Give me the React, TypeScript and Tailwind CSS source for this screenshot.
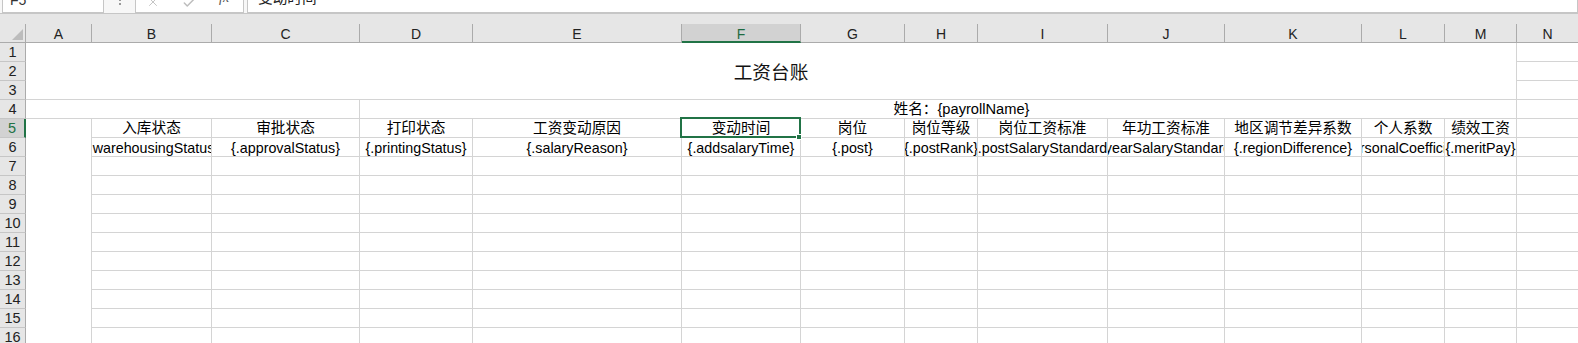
import React from "react";
import { X, Check, ChevronDown } from "lucide-react";

const GRID =
  "grid grid-cols-[26px_66px_120px_148px_113px_209px_119px_104px_73px_130px_117px_137px_83px_72px_1fr]";

const letters = ["A", "B", "C", "D", "E", "F", "G", "H", "I", "J", "K", "L", "M", "N"];
const heads = [
  "入库状态",
  "审批状态",
  "打印状态",
  "工资变动原因",
  "变动时间",
  "岗位",
  "岗位等级",
  "岗位工资标准",
  "年功工资标准",
  "地区调节差异系数",
  "个人系数",
  "绩效工资",
];
const data = [
  "{.warehousingStatus}",
  "{.approvalStatus}",
  "{.printingStatus}",
  "{.salaryReason}",
  "{.addsalaryTime}",
  "{.post}",
  "{.postRank}",
  "{.postSalaryStandard}",
  "{.yearSalaryStandard}",
  "{.regionDifference}",
  "{.personalCoefficient}",
  "{.meritPay}",
];

function RowHead({ n, active }: { n: number; active?: boolean }) {
  return (
    <div
      className={
        "flex items-center justify-center border-b border-b-[#c6c6c6] text-[14.5px] leading-none " +
        (active
          ? "bg-[#d2d2d2] border-r-2 border-r-[#217346] text-[#217346]"
          : "bg-[#e6e6e6] border-r border-r-[#ababab] text-[#222]")
      }
    >
      {n}
    </div>
  );
}

const cell = "border-r border-b border-[#d4d4d4]";
const nCell = "border-b border-[#d4d4d4]";

export default function App() {
  const bodyRows: React.ReactNode[] = [];

  // rows 1-3
  bodyRows.push(<RowHead key="rh1" n={1} />);
  bodyRows.push(
    <div
      key="title"
      className={`${cell} col-span-13 row-span-3 flex items-center justify-center pt-[5px] text-[18.67px] text-[#111]`}
    >
      工资台账
    </div>
  );
  bodyRows.push(<div key="n1" className={nCell} />);
  bodyRows.push(<RowHead key="rh2" n={2} />);
  bodyRows.push(<div key="n2" className={nCell} />);
  bodyRows.push(<RowHead key="rh3" n={3} />);
  bodyRows.push(<div key="n3" className={nCell} />);

  // row 4
  bodyRows.push(<RowHead key="rh4" n={4} />);
  bodyRows.push(<div key="a4" className={`${cell} col-span-3`} />);
  bodyRows.push(
    <div
      key="d4"
      className={`${cell} col-span-10 flex items-center justify-center pl-[47px] text-[14.67px] whitespace-nowrap`}
    >
      姓名：{"{payrollName}"}
    </div>
  );
  bodyRows.push(<div key="n4" className={nCell} />);

  // row 5
  bodyRows.push(<RowHead key="rh5" n={5} active />);
  bodyRows.push(<div key="a5" className="row-span-12 border-r border-[#d4d4d4] bg-white" />);
  heads.forEach((h, i) => {
    const selected = i === 4;
    bodyRows.push(
      <div
        key={"h" + i}
        className={`${cell} relative flex items-center justify-center whitespace-nowrap text-[14.67px] pt-[1px]`}
      >
        {h}
        {selected && (
          <div className="absolute -left-[2px] -top-[2px] -right-[1px] -bottom-[1px] z-10 border-2 border-[#217346]">
            <div className="absolute -right-[3px] -bottom-[4px] h-[6px] w-[6px] bg-[#217346] border border-white" />
          </div>
        )}
      </div>
    );
  });
  bodyRows.push(<div key="n5" className={nCell} />);

  // row 6
  bodyRows.push(<RowHead key="rh6" n={6} />);
  data.forEach((d, i) => {
    bodyRows.push(
      <div
        key={"d" + i}
        className={`${cell} flex items-center justify-center overflow-hidden whitespace-nowrap text-[14.3px] pt-[2px]`}
      >
        <span className="shrink-0">{d}</span>
      </div>
    );
  });
  bodyRows.push(<div key="n6" className={nCell} />);

  for (let r = 7; r <= 16; r++) {
    bodyRows.push(<RowHead key={"rh" + r} n={r} />);
    for (let c = 0; c < 12; c++) {
      bodyRows.push(<div key={`c${r}-${c}`} className={cell} />);
    }
    bodyRows.push(<div key={"n" + r} className={nCell} />);
  }

  return (
    <div className="w-[1578px] h-[343px] overflow-hidden bg-white text-black font-['Liberation_Sans','Noto_Sans_CJK_SC',sans-serif]">
      {/* formula bar */}
      <div className="h-[14px] bg-[#f7f7f7] border-b border-[#c6c6c6] flex items-end overflow-hidden">
        <div className="ml-[2px] w-[102px] h-[30px] shrink-0 bg-white border border-[#c6c6c6] flex items-end justify-between pb-[5px] pl-[7px] pr-[4px]">
          <span className="text-[14px] leading-none text-[#333]">F5</span>
          <ChevronDown size={10} className="text-[#666] mb-[7px]" />
        </div>
        <div className="w-[31px] shrink-0 flex flex-col items-center justify-end gap-[2px] pb-[8px]">
          <span className="block h-[2px] w-[2px] bg-[#999]" />
          <span className="block h-[2px] w-[2px] bg-[#999]" />
          <span className="block h-[2px] w-[2px] bg-[#999]" />
        </div>
        <div className="w-[109px] h-[30px] shrink-0 bg-white border border-[#c6c6c6] flex items-end">
          <X size={14} strokeWidth={1.5} className="ml-[10px] mb-[3px] text-[#bdbdbd]" />
          <Check size={14} strokeWidth={2.5} className="ml-[22px] mb-[2px] text-[#bdbdbd]" />
          <span className="ml-[23px] mb-[7px] text-[14px] italic leading-none text-[#555] font-['Liberation_Serif',serif]">
            fx
          </span>
        </div>
        <div className="ml-[3px] flex-1 h-[30px] bg-white border border-[#c6c6c6] flex items-end pb-[6px] pl-[10px]">
          <span className="text-[14.67px] leading-none text-[#222]">变动时间</span>
        </div>
      </div>

      {/* column headers */}
      <div className="bg-[#e6e6e6] pt-[10px]">
        <div className={GRID}>
          <div className="h-[19px] border-r border-b border-[#ababab] flex items-end justify-end pr-[2px] pb-[2px]">
            <svg width="11" height="11" viewBox="0 0 11 11">
              <polygon points="11,0 11,11 0,11" fill="#bcbcbc" />
            </svg>
          </div>
          {letters.map((l) => (
            <div
              key={l}
              className={
                "h-[19px] flex items-center justify-center pt-[2px] text-[14px] leading-none " +
                (l === "F"
                  ? "bg-[#d2d2d2] border-r border-r-[#ababab] border-b-2 border-b-[#217346] text-[#1e6b41]"
                  : l === "N"
                  ? "border-b border-[#ababab] text-[#222]"
                  : "border-r border-b border-[#ababab] text-[#222]")
              }
            >
              {l}
            </div>
          ))}
        </div>
      </div>

      {/* body */}
      <div className={`${GRID} auto-rows-[19px] leading-none`}>{bodyRows}</div>
    </div>
  );
}
